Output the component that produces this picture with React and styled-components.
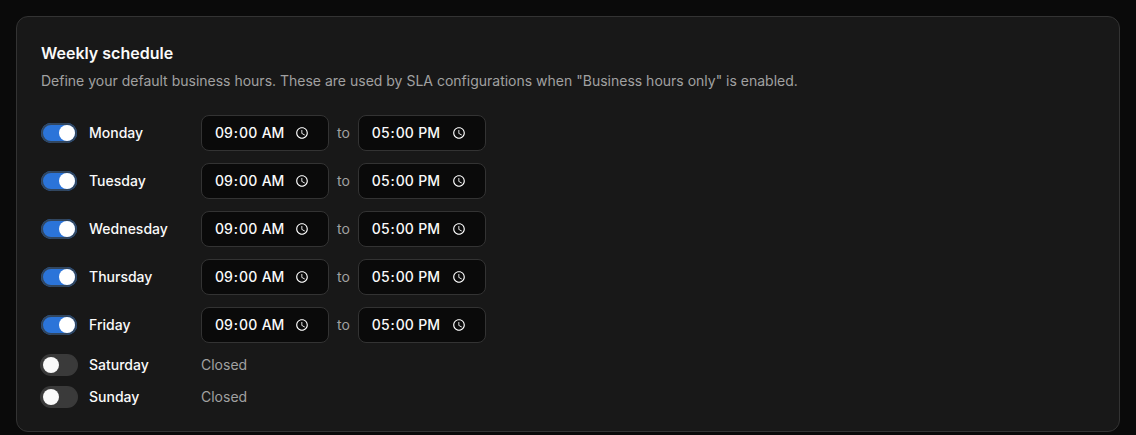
import React, { useState } from "react";
import styled, { createGlobalStyle } from "styled-components";

const GlobalStyle = createGlobalStyle`
  *, *::before, *::after {
    box-sizing: border-box;
  }

  body {
    margin: 0;
    background: #0a0a0a;
    color: #fafafa;
    color-scheme: dark;
    font-family: Inter, "Liberation Sans", sans-serif;
    font-size: 14px;
    line-height: 20px;
  }
`;

const Page = styled.main`
  padding: 16px 16px 0;
`;

const Card = styled.section`
  display: flex;
  flex-direction: column;
  gap: 24px;
  padding: 24px;
  background: #181818;
  border: 1px solid #333333;
  border-radius: 12px;
`;

const Header = styled.header`
  display: flex;
  flex-direction: column;
  gap: 6px;
`;

const Title = styled.h2`
  margin: 0;
  font-size: 16px;
  font-weight: 600;
  line-height: 24px;
`;

const Description = styled.p`
  margin: 0;
  color: #a1a1a1;
`;

const Days = styled.div`
  display: flex;
  flex-direction: column;
  gap: 12px;
`;

const DayRow = styled.div`
  display: flex;
  align-items: center;
  gap: 12px;
`;

const Switch = styled.input`
  appearance: none;
  flex: none;
  display: flex;
  align-items: center;
  width: 36px;
  height: 20px;
  margin: 0;
  padding: 0 2px;
  border-radius: 10px;
  background: #3a3a3a;
  box-shadow: 0 0 0 1px #3a3a3a;
  cursor: pointer;

  &::before {
    content: "";
    width: 16px;
    height: 16px;
    border-radius: 50%;
    background: #fafafa;
  }

  &:checked {
    justify-content: flex-end;
    background: #2b74d9;
    box-shadow: inset 0 0 0 2px #31465f;
  }

  &:checked::before {
    background: #ffffff;
  }
`;

const DayLabel = styled.label`
  width: 100px;
  font-weight: 500;
`;

const Hours = styled.div`
  display: flex;
  align-items: center;
  gap: 8px;
`;

const TimeInput = styled.input`
  width: 128px;
  height: 36px;
  padding: 4px 15px 4px 12px;
  border: 1px solid #333333;
  border-radius: 8px;
  background: #0a0a0a;
  color: #fafafa;
  font: inherit;
  font-weight: 500;
`;

const Muted = styled.span`
  color: #a1a1a1;
`;

const defaultSchedule = [
  { day: "Monday", enabled: true },
  { day: "Tuesday", enabled: true },
  { day: "Wednesday", enabled: true },
  { day: "Thursday", enabled: true },
  { day: "Friday", enabled: true },
  { day: "Saturday", enabled: false },
  { day: "Sunday", enabled: false },
].map((entry) => ({ ...entry, start: "09:00", end: "17:00" }));

const WeeklySchedule = () => {
  const [schedule, setSchedule] = useState(defaultSchedule);

  const updateDay = (day, changes) => {
    setSchedule((current) =>
      current.map((entry) => (entry.day === day ? { ...entry, ...changes } : entry))
    );
  };

  return (
    <Card>
      <Header>
        <Title>Weekly schedule</Title>
        <Description>
          Define your default business hours. These are used by SLA configurations when "Business hours only" is enabled.
        </Description>
      </Header>
      <Days>
        {schedule.map(({ day, enabled, start, end }) => (
          <DayRow key={day}>
            <Switch
              type="checkbox"
              role="switch"
              id={day}
              checked={enabled}
              onChange={(e) => updateDay(day, { enabled: e.target.checked })}
            />
            <DayLabel htmlFor={day}>{day}</DayLabel>
            {enabled ? (
              <Hours>
                <TimeInput
                  type="time"
                  aria-label={`${day} start`}
                  value={start}
                  onChange={(e) => updateDay(day, { start: e.target.value })}
                />
                <Muted>to</Muted>
                <TimeInput
                  type="time"
                  aria-label={`${day} end`}
                  value={end}
                  onChange={(e) => updateDay(day, { end: e.target.value })}
                />
              </Hours>
            ) : (
              <Muted>Closed</Muted>
            )}
          </DayRow>
        ))}
      </Days>
    </Card>
  );
};

const App = () => (
  <>
    <GlobalStyle />
    <Page>
      <WeeklySchedule />
    </Page>
  </>
);

export default App;
